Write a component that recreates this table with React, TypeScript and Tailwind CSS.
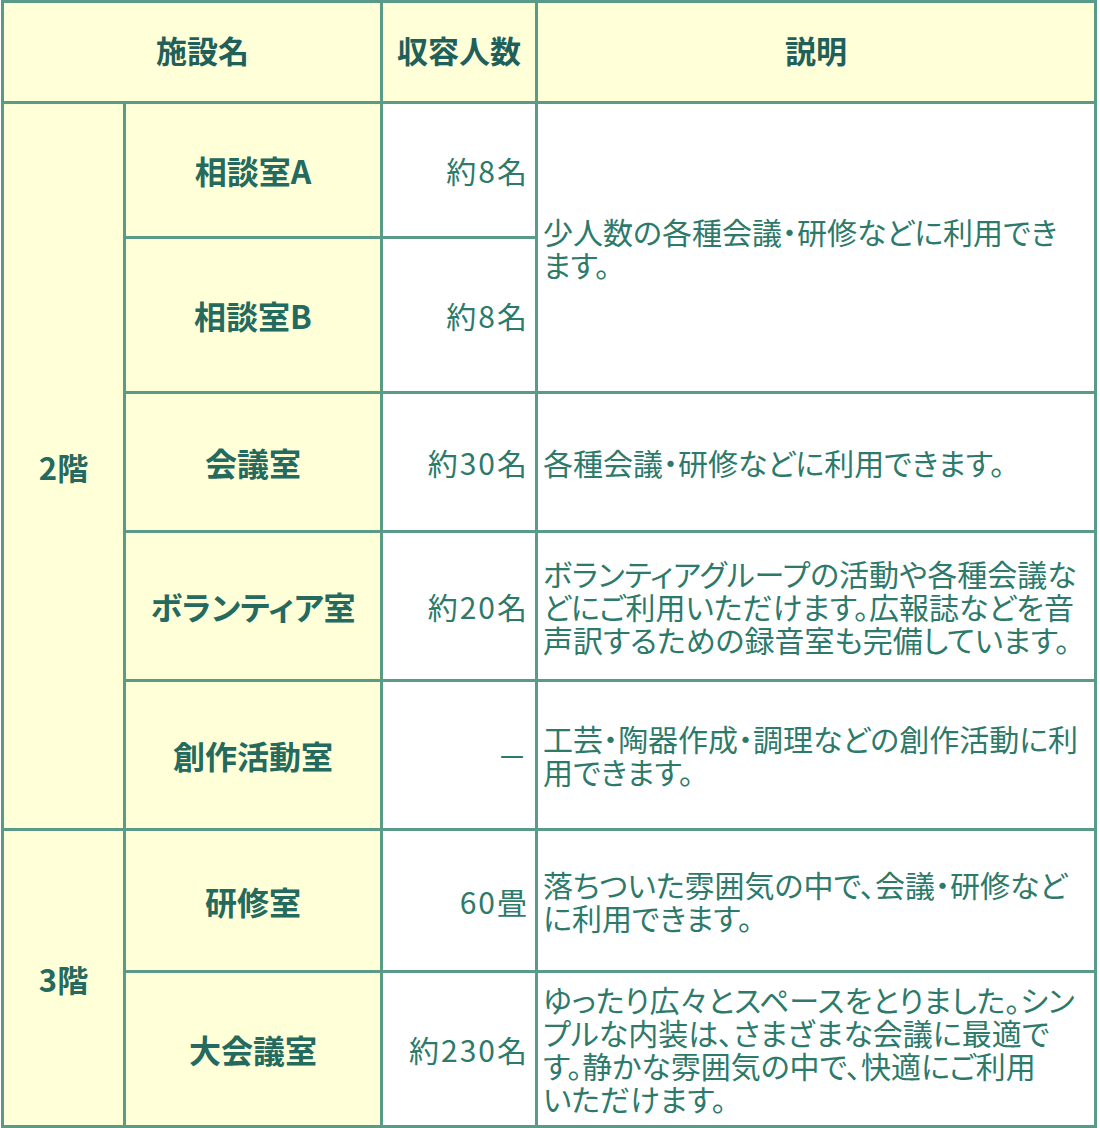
import React from "react";

const yellow = "bg-[#ffffd8]";

function Head({ children, span }: { children: React.ReactNode; span?: boolean }) {
  return (
    <div
      className={`${yellow} ${span ? "col-span-2 pl-[21px]" : ""} flex items-center justify-center pb-[5px] text-[31px] font-bold text-[#1f615a] leading-none`}
    >
      {children}
    </div>
  );
}

function Name({ children }: { children: React.ReactNode }) {
  return (
    <div className={`${yellow} flex items-center justify-center text-[32px] font-bold text-[#246a5e] leading-none whitespace-nowrap [font-feature-settings:'palt']`}>
      {children}
    </div>
  );
}

function Cap({ children }: { children: React.ReactNode }) {
  return (
    <div className="bg-white flex items-center justify-end pr-[6px] text-[30px] tracking-[2px] text-[#2d7a6a] leading-none whitespace-nowrap">
      {children}
    </div>
  );
}

function Desc({ lines, tall }: { lines: string[]; tall?: boolean }) {
  return (
    <div
      className={`bg-white ${tall ? "row-span-2" : ""} flex items-center pl-[5px] text-[30px] leading-[33px] text-[#2d7a6a] whitespace-nowrap [font-feature-settings:'palt'] overflow-hidden`}
    >
      <div>
        {lines.map((l, i) => (
          <div key={i}>{l}</div>
        ))}
      </div>
    </div>
  );
}

export default function App() {
  return (
    <div className="w-[1100px] h-[1128px] bg-white overflow-hidden font-['Noto_Sans_CJK_JP',sans-serif]">
      <div className="ml-px w-fit grid grid-cols-[119px_254px_152px_556px] grid-rows-[98px_132px_152px_136px_146px_146px_139px_152px] gap-[3px] p-[3px] bg-[#5a9a88]">
        <Head span>施設名</Head>
        <Head>収容人数</Head>
        <Head>説明</Head>

        <div className={`${yellow} row-span-5 flex items-center justify-center text-[31px] font-bold text-[#246a5e] leading-none`}>
          2階
        </div>
        <Name>相談室A</Name>
        <Cap>約8名</Cap>
        <Desc tall lines={["少人数の各種会議・研修などに利用でき", "ます。"]} />

        <Name>相談室B</Name>
        <Cap>約8名</Cap>

        <Name>会議室</Name>
        <Cap>約30名</Cap>
        <Desc lines={["各種会議・研修などに利用できます。"]} />

        <Name>ボランティア室</Name>
        <Cap>約20名</Cap>
        <Desc
          lines={[
            "ボランティアグループの活動や各種会議な",
            "どにご利用いただけます。広報誌などを音",
            "声訳するための録音室も完備しています。",
          ]}
        />

        <Name>創作活動室</Name>
        <Cap>－</Cap>
        <Desc lines={["工芸・陶器作成・調理などの創作活動に利", "用できます。"]} />

        <div className={`${yellow} row-span-2 flex items-center justify-center text-[31px] font-bold text-[#246a5e] leading-none`}>
          3階
        </div>
        <Name>研修室</Name>
        <Cap>60畳</Cap>
        <Desc lines={["落ちついた雰囲気の中で、会議・研修など", "に利用できます。"]} />

        <Name>大会議室</Name>
        <Cap>約230名</Cap>
        <Desc
          lines={[
            "ゆったり広々とスペースをとりました。シン",
            "プルな内装は、さまざまな会議に最適で",
            "す。静かな雰囲気の中で、快適にご利用",
            "いただけます。",
          ]}
        />
      </div>
    </div>
  );
}
